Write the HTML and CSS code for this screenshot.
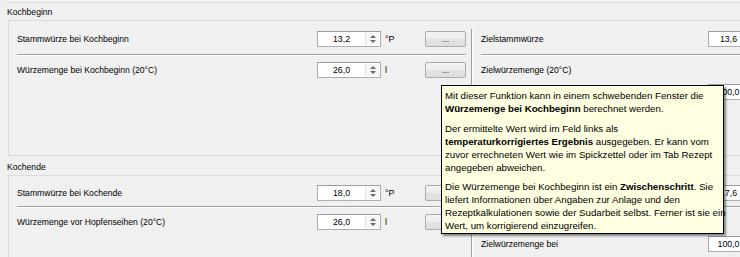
FILE: index.html
```html
<!DOCTYPE html>
<html lang="de">
    <head>
        <meta charset="UTF-8">
        <meta name="viewport" content="width=device-width, initial-scale=1.0">
        <title>Kochen</title>

        <link rel="stylesheet" href="styles.css">
    </head>
    <body>
        <div class="fenster">

            <div class="gruppe-vorher"></div>

            <!-- Gruppe Kochbeginn -->
            <div class="gruppe-titel">Kochbeginn</div>
            <div class="gruppe gruppe-oben">
                <div class="spalte-links">
                    <div class="zeile">
                        <span class="beschriftung">Stammwürze bei Kochbeginn</span>
                        <div class="spin"><span class="wert">13,2</span><span class="pfeile"><i class="auf"></i><i class="ab"></i></span></div>
                        <span class="einheit">°P</span>
                        <button class="knopf">...</button>
                    </div>
                    <div class="trenner"></div>
                    <div class="zeile">
                        <span class="beschriftung">Würzemenge bei Kochbeginn (20°C)</span>
                        <div class="spin"><span class="wert">26,0</span><span class="pfeile"><i class="auf"></i><i class="ab"></i></span></div>
                        <span class="einheit">l</span>
                        <button class="knopf">...</button>
                    </div>
                </div>
                <div class="vtrenner"></div>
                <div class="spalte-rechts">
                    <div class="zeile">
                        <span class="beschriftung">Zielstammwürze</span>
                        <div class="spin spin-rechts"><span class="wert">13,6</span><span class="pfeile"><i class="auf"></i><i class="ab"></i></span></div>
                    </div>
                    <div class="trenner"></div>
                    <div class="zeile">
                        <span class="beschriftung">Zielwürzemenge (20°C)</span>
                    </div>
                    <!-- Beschriftung liegt unter dem Tooltip -->
                    <div class="zeile zeile-nach">
                        <span class="beschriftung"></span>
                        <div class="spin spin-rechts"><span class="wert">100,0</span><span class="pfeile"><i class="auf"></i><i class="ab"></i></span></div>
                    </div>
                </div>
            </div>

            <!-- Gruppe Kochende -->
            <div class="gruppe-titel titel-zwei">Kochende</div>
            <div class="gruppe gruppe-unten">
                <div class="spalte-links">
                    <div class="zeile">
                        <span class="beschriftung">Stammwürze bei Kochende</span>
                        <div class="spin"><span class="wert">18,0</span><span class="pfeile"><i class="auf"></i><i class="ab"></i></span></div>
                        <span class="einheit">°P</span>
                        <button class="knopf"></button>
                    </div>
                    <div class="trenner"></div>
                    <div class="zeile">
                        <span class="beschriftung">Würzemenge vor Hopfenseihen (20°C)</span>
                        <div class="spin"><span class="wert">26,0</span><span class="pfeile"><i class="auf"></i><i class="ab"></i></span></div>
                        <span class="einheit">l</span>
                        <button class="knopf"></button>
                    </div>
                </div>
                <div class="vtrenner"></div>
                <div class="spalte-rechts">
                    <div class="zeile">
                        <span class="beschriftung"></span>
                        <div class="spin spin-rechts"><span class="wert">17,6</span><span class="pfeile"><i class="auf"></i><i class="ab"></i></span></div>
                    </div>
                    <div class="trenner"></div>
                    <div class="zeile">
                        <span class="beschriftung"></span>
                    </div>
                    <div class="zeile zeile-nach">
                        <span class="beschriftung">Zielwürzemenge bei</span>
                        <div class="spin spin-rechts"><span class="wert">100,0</span><span class="pfeile"><i class="auf"></i><i class="ab"></i></span></div>
                    </div>
                </div>
            </div>

            <!-- Tooltip über dem Knopf -->
            <div class="tooltip">
                <p>Mit dieser Funktion kann in einem schwebenden Fenster die<br><b>Würzemenge bei Kochbeginn</b> berechnet werden.</p>
                <p>Der ermittelte Wert wird im Feld links als<br><b>temperaturkorrigiertes Ergebnis</b> ausgegeben. Er kann vom<br>zuvor errechneten Wert wie im Spickzettel oder im Tab Rezept<br>angegeben abweichen.</p>
                <p>Die Würzemenge bei Kochbeginn ist ein <b>Zwischenschritt</b>. Sie<br>liefert Informationen über Angaben zur Anlage und den<br>Rezeptkalkulationen sowie der Sudarbeit selbst. Ferner ist sie ein<br>Wert, um korrigierend einzugreifen.</p>
            </div>

        </div>
    </body>
</html>
```

FILE: styles.css
```css
body{
    margin: 0;
    background-color: #f0f0f0;
    font-family: "Liberation Sans", Arial, sans-serif;
    font-size: 8.6px;
    color: #000;
}
.fenster{
    position: relative;
    width: 740px;
    height: 257px;
    overflow: hidden;
}
.gruppe-vorher{
    height: 2px;
    margin-left: 6px;
    border-bottom: 1px solid #dcdcdc;
}
.gruppe-titel{
    padding: 2px 0 0 7px;
    line-height: 15px;
    height: 15px;
}
.titel-zwei{
    padding-top: 4px;
}
.gruppe{
    display: flex;
    width: 800px;
    margin-left: 8px;
    border: 1px solid #dcdcdc;
    box-sizing: border-box;
}
.gruppe-oben{
    height: 136px;
}
.gruppe-unten{
    height: 120px;
}
.spalte-links{
    width: 462px;
    padding: 10px 5px 0 8px;
    box-sizing: border-box;
}
.gruppe-unten .spalte-links,
.gruppe-unten .spalte-rechts{
    padding-top: 9px;
}
.spalte-rechts{
    flex: 1;
    padding: 10px 0 0 8px;
    box-sizing: border-box;
}
.zeile{
    display: flex;
    align-items: center;
    height: 16px;
}
.zeile-nach{
    margin-top: 6px;
}
.beschriftung{
    flex: 1;
    white-space: nowrap;
}
.spalte-rechts .beschriftung{
    flex: 0 0 227px;
    overflow: hidden;
}
.trenner{
    height: 0;
    margin: 7px 0 6px 0;
    border-top: 1px solid #a0a0a0;
    border-bottom: 1px solid #ffffff;
}
.gruppe-unten .trenner{
    margin-top: 5px;
}
.vtrenner{
    width: 0;
    margin: 8px 0 4px 0;
    border-left: 1px solid #a0a0a0;
    border-right: 1px solid #ffffff;
}

/* Drehfeld */
.spin{
    display: flex;
    width: 64px;
    height: 16px;
    box-sizing: border-box;
    background-color: #fff;
    border: 1px solid #abadb3;
    border-top-color: #9a9ca3;
}
.spin-rechts{
    width: 56px;
}
.wert{
    flex: 1;
    text-align: center;
    line-height: 14px;
    font-size: 8.8px;
}
.pfeile{
    display: flex;
    flex-direction: column;
    justify-content: center;
    align-items: center;
    gap: 2px;
    width: 13px;
    margin: 1px 1px 1px 0;
    background-color: #f6f6f6;
    border-left: 1px solid #e2e2e2;
}
.auf, .ab{
    width: 0;
    height: 0;
    border-left: 3px solid transparent;
    border-right: 3px solid transparent;
}
.auf{
    border-bottom: 3px solid #6a6a6a;
}
.ab{
    border-top: 3px solid #6a6a6a;
}
.einheit{
    width: 40px;
    margin-left: 4px;
    font-size: 9px;
}
.knopf{
    width: 41px;
    height: 16px;
    padding: 0;
    font-family: "Liberation Sans", Arial, sans-serif;
    font-size: 9px;
    line-height: 12px;
    color: #333;
    border: 1px solid #acacac;
    border-radius: 2px;
    background: linear-gradient(#f4f4f4, #ececec 50%, #e3e3e3 51%, #dedede);
}

/* Tooltip */
.tooltip{
    position: absolute;
    left: 441px;
    top: 85px;
    width: 283px;
    height: 149px;
    box-sizing: border-box;
    padding: 3px 3px 0 3px;
    background-color: #ffffe1;
    border: 1px solid #000;
    box-shadow: 2px 2px 2px rgba(0, 0, 0, 0.45);
    font-size: 9.7px;
    line-height: 13px;
    white-space: nowrap;
}
.tooltip p{
    margin: 0 0 6.5px 0;
}
```
